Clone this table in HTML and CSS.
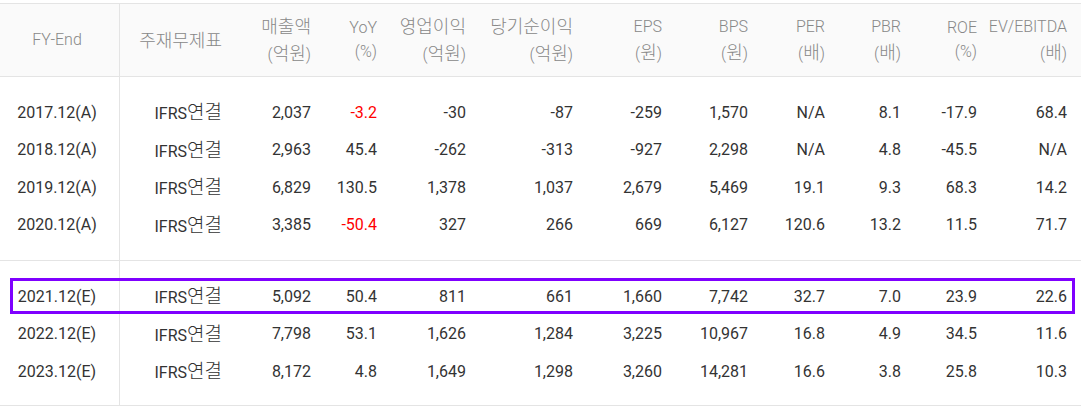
FILE: index.html
```html
<!DOCTYPE html>
<html lang="ko">
<head>
<meta charset="utf-8">
<title>재무 요약</title>
<link rel="stylesheet" href="styles.css">
</head>
<body>
<div class="fin">
  <div class="row head">
    <div class="c">FY-End</div>
    <div class="c"><span class="ko">주재무제표</span></div>
    <div class="c"><span class="l"><span class="ko">매출액</span></span><span class="l">(<span class="ko">억원</span>)</span></div>
    <div class="c"><span class="l">YoY</span><span class="l">(%)</span></div>
    <div class="c"><span class="l"><span class="ko">영업이익</span></span><span class="l">(<span class="ko">억원</span>)</span></div>
    <div class="c"><span class="l"><span class="ko">당기순이익</span></span><span class="l">(<span class="ko">억원</span>)</span></div>
    <div class="c"><span class="l">EPS</span><span class="l">(<span class="ko">원</span>)</span></div>
    <div class="c"><span class="l">BPS</span><span class="l">(<span class="ko">원</span>)</span></div>
    <div class="c"><span class="l">PER</span><span class="l">(<span class="ko">배</span>)</span></div>
    <div class="c"><span class="l">PBR</span><span class="l">(<span class="ko">배</span>)</span></div>
    <div class="c"><span class="l">ROE</span><span class="l">(%)</span></div>
    <div class="c"><span class="l">EV/EBITDA</span><span class="l">(<span class="ko">배</span>)</span></div>
  </div>
  <div class="group g1">
    <div class="row data">
      <div class="c">2017.12(A)</div><div class="c">IFRS<span class="ko">연결</span></div><div class="c">2,037</div><div class="c neg">-3.2</div><div class="c">-30</div><div class="c">-87</div><div class="c">-259</div><div class="c">1,570</div><div class="c">N/A</div><div class="c">8.1</div><div class="c">-17.9</div><div class="c">68.4</div>
    </div>
    <div class="row data">
      <div class="c">2018.12(A)</div><div class="c">IFRS<span class="ko">연결</span></div><div class="c">2,963</div><div class="c">45.4</div><div class="c">-262</div><div class="c">-313</div><div class="c">-927</div><div class="c">2,298</div><div class="c">N/A</div><div class="c">4.8</div><div class="c">-45.5</div><div class="c">N/A</div>
    </div>
    <div class="row data">
      <div class="c">2019.12(A)</div><div class="c">IFRS<span class="ko">연결</span></div><div class="c">6,829</div><div class="c">130.5</div><div class="c">1,378</div><div class="c">1,037</div><div class="c">2,679</div><div class="c">5,469</div><div class="c">19.1</div><div class="c">9.3</div><div class="c">68.3</div><div class="c">14.2</div>
    </div>
    <div class="row data">
      <div class="c">2020.12(A)</div><div class="c">IFRS<span class="ko">연결</span></div><div class="c">3,385</div><div class="c neg">-50.4</div><div class="c">327</div><div class="c">266</div><div class="c">669</div><div class="c">6,127</div><div class="c">120.6</div><div class="c">13.2</div><div class="c">11.5</div><div class="c">71.7</div>
    </div>
  </div>
  <div class="group g2">
    <div class="row data hl">
      <div class="c">2021.12(E)</div><div class="c">IFRS<span class="ko">연결</span></div><div class="c">5,092</div><div class="c">50.4</div><div class="c">811</div><div class="c">661</div><div class="c">1,660</div><div class="c">7,742</div><div class="c">32.7</div><div class="c">7.0</div><div class="c">23.9</div><div class="c">22.6</div>
    </div>
    <div class="row data">
      <div class="c">2022.12(E)</div><div class="c">IFRS<span class="ko">연결</span></div><div class="c">7,798</div><div class="c">53.1</div><div class="c">1,626</div><div class="c">1,284</div><div class="c">3,225</div><div class="c">10,967</div><div class="c">16.8</div><div class="c">4.9</div><div class="c">34.5</div><div class="c">11.6</div>
    </div>
    <div class="row data">
      <div class="c">2023.12(E)</div><div class="c">IFRS<span class="ko">연결</span></div><div class="c">8,172</div><div class="c">4.8</div><div class="c">1,649</div><div class="c">1,298</div><div class="c">3,260</div><div class="c">14,281</div><div class="c">16.6</div><div class="c">3.8</div><div class="c">25.8</div><div class="c">10.3</div>
    </div>
  </div>
</div>
</body>
</html>
```
FILE: styles.css
```css
html, body {
  margin: 0;
  padding: 0;
  background: #fff;
}
body {
  font-family: Roboto, "Noto Sans CJK KR", sans-serif;
}
.fin {
  margin-top: 3px;
  width: 1081px;
}
.row {
  display: grid;
  grid-template-columns: 120px 102px 89px 66px 89px 107px 89px 86px 77px 76px 76px 90px;
}
.c {
  text-align: right;
  white-space: nowrap;
}
.ko {
  font-family: "Noto Sans CJK KR", sans-serif;
}
.row .c:first-child {
  text-align: center;
  padding-right: 6px;
}
.head {
  height: 72px;
  border-top: 1px solid #e4e4e4;
  border-bottom: 1px solid #e4e4e4;
  background: linear-gradient(#e4e4e4, #e4e4e4) 119px 0 / 1px 100% no-repeat, #fafafa;
  align-items: center;
  color: #888;
  font-size: 16px;
  font-weight: 300;
  line-height: 24px;
}
.head .ko {
  font-size: 18px;
}
.head .l {
  display: block;
}
.group {
  border-bottom: 1px solid #e4e4e4;
  background: linear-gradient(#e4e4e4, #e4e4e4) 119px 0 / 1px 100% no-repeat;
}
.g1 {
  padding: 17px 0 16px;
}
.g2 {
  padding: 17px 0 14.5px;
}
.data {
  height: 37.5px;
  align-items: center;
  font-size: 16px;
  line-height: 20px;
  color: #333;
}
.data .ko {
  font-size: 19px;
  font-weight: 300;
}
.neg {
  color: #f00;
}
.data.hl {
  position: relative;
}
.data.hl::after {
  content: "";
  position: absolute;
  left: 10px;
  top: 0;
  width: 1065px;
  height: 36px;
  box-sizing: border-box;
  border: 3px solid #7f00ff;
}
```
